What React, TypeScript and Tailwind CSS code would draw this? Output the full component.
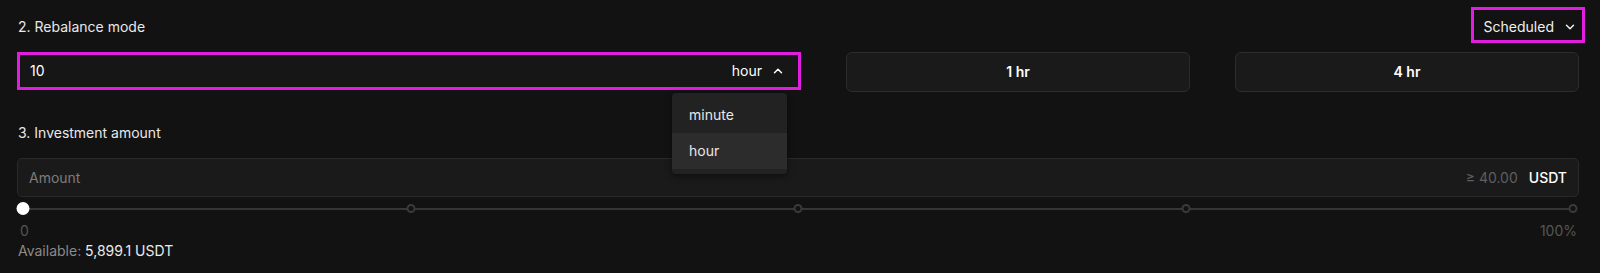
import { ChevronDown, ChevronUp } from 'lucide-react';

const marks = ['left-[25%]', 'left-[50%]', 'left-[75%]', 'left-[100%]'];

const App = () => {
  return (
    <div className="w-[1600px] h-[273px] bg-[#121212] pl-[17px] pr-[21px] pt-[7px] text-[14px] leading-[20px] text-[#e8e8e8] font-['Inter',sans-serif] overflow-hidden">
      {/* 2. Rebalance mode */}
      <div className="flex justify-between items-start">
        <div className="mt-[10px] ml-[1px]">2. Rebalance mode</div>
        <button className="flex items-center gap-[9px] border-[3px] border-[#e01de0] pl-[10px] pr-[5px] pt-[7px] pb-[3px] mr-[-6px] text-[#f0f0f0]">
          <span>Scheduled</span>
          <ChevronDown size={14} strokeWidth={2.5} />
        </button>
      </div>

      <div className="flex gap-[45px] mt-[9px]">
        <div className="relative w-[784px] h-[38px] shrink-0 border-[3px] border-[#e01de0] bg-[#161616] flex items-center justify-between pl-[10px] pr-[13px]">
          <span className="text-white">10</span>
          <span className="flex items-center gap-[9px] text-white">
            hour
            <ChevronUp size={14} strokeWidth={2.5} />
          </span>
          {/* unit menu */}
          <div className="absolute z-10 left-[652px] top-[38px] w-[115px] bg-[#222222] rounded-[4px] pt-[4px] pb-[5px] shadow-[0_2px_6px_rgba(0,0,0,0.5)]">
            <div className="h-[36px] flex items-center pl-[17px] text-[#e8e8e8]">minute</div>
            <div className="h-[36px] flex items-center pl-[17px] bg-[#2c2c2c] text-[#e8e8e8]">hour</div>
          </div>
        </div>
        <button className="w-[344px] h-[40px] shrink-0 rounded-[6px] border border-[#2c2c2c] bg-[#1a1a1a] font-semibold text-white">1 hr</button>
        <button className="w-[344px] h-[40px] shrink-0 rounded-[6px] border border-[#2c2c2c] bg-[#1a1a1a] font-semibold text-white">4 hr</button>
      </div>

      {/* 3. Investment amount */}
      <div className="mt-[31px] ml-[1px]">3. Investment amount</div>
      <div className="mt-[15px] h-[39px] rounded-[5px] border border-[#2a2a2a] bg-[#1a1a1a] flex items-center justify-between pl-[11px] pr-[11px]">
        <span className="text-[#7c7c7c]">Amount</span>
        <span className="flex items-center gap-[11px]">
          <span className="text-[#5e5e5e]">≥ 40.00</span>
          <span className="font-medium text-white">USDT</span>
        </span>
      </div>

      {/* slider */}
      <div className="mt-[4px] h-[16px] px-[6px]">
        <div className="relative h-full">
          <div className="absolute left-0 right-0 top-[7px] h-[2px] bg-[#363636]" />
          {marks.map((m) => (
            <div key={m} className={`absolute ${m} top-[3px] w-[9px] h-[9px] -translate-x-1/2 rounded-full border-2 border-[#3a3a3a] bg-[#121212]`} />
          ))}
          <div className="absolute left-0 top-[1px] w-[13px] h-[13px] -translate-x-1/2 rounded-full bg-white" />
        </div>
      </div>
      <div className="mt-[4px] flex justify-between text-[#555555]">
        <span className="ml-[3px]">0</span>
        <span className="mr-[2px]">100%</span>
      </div>
      <div className="ml-[1px]">
        <span className="text-[#8a8a8a]">Available: </span>
        <span className="text-[#eaeaea]">5,899.1 USDT</span>
      </div>
    </div>
  );
};

export default App;
